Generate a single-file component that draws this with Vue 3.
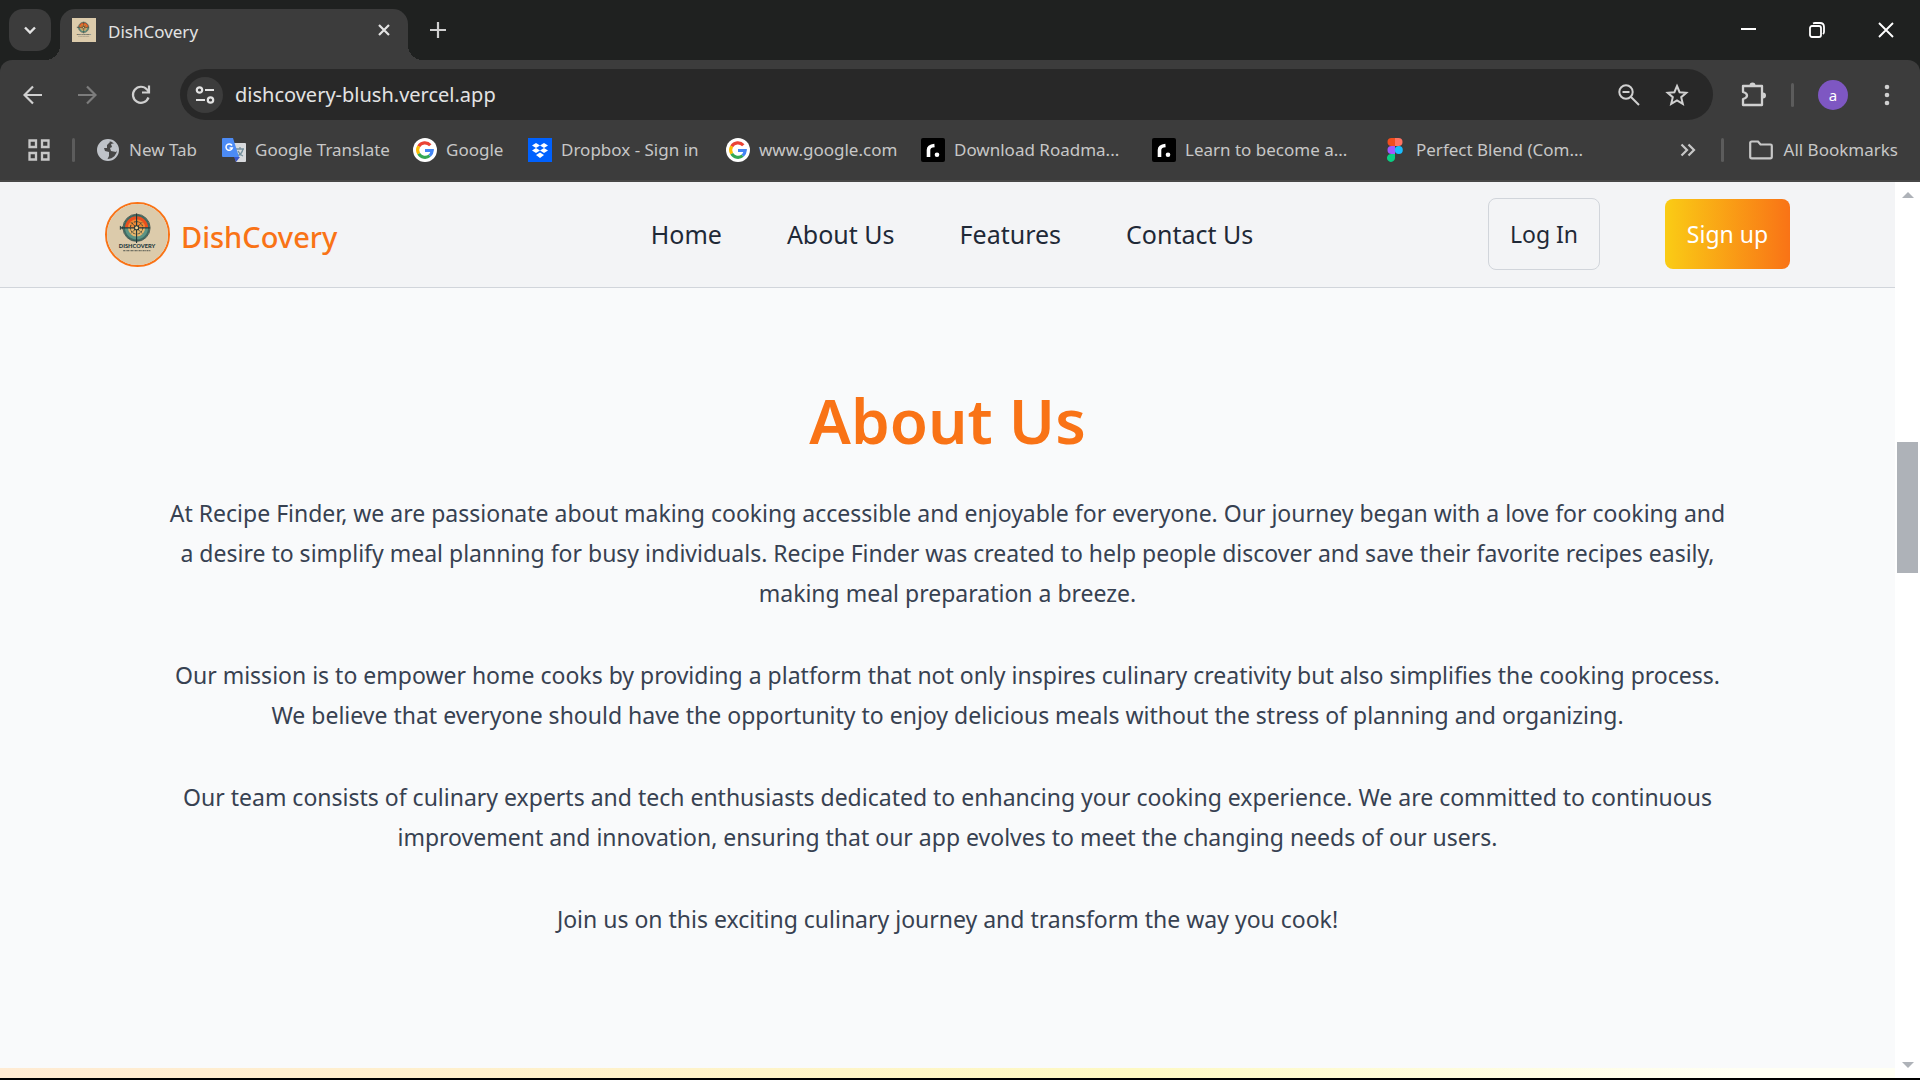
<script setup>
const bookmarks = [
  { label: 'New Tab', icon: 'globe' },
  { label: 'Google Translate', icon: 'translate' },
  { label: 'Google', icon: 'google' },
  { label: 'Dropbox - Sign in', icon: 'dropbox' },
  { label: 'www.google.com', icon: 'google' },
  { label: 'Download Roadma...', icon: 'roadmap' },
  { label: 'Learn to become a...', icon: 'roadmap' },
  { label: 'Perfect Blend (Com...', icon: 'figma' },
]
const links = ['Home', 'About Us', 'Features', 'Contact Us']
const paragraphs = [
  [
    'At Recipe Finder, we are passionate about making cooking accessible and enjoyable for everyone. Our journey began with a love for cooking and',
    'a desire to simplify meal planning for busy individuals. Recipe Finder was created to help people discover and save their favorite recipes easily,',
    'making meal preparation a breeze.',
  ],
  [
    'Our mission is to empower home cooks by providing a platform that not only inspires culinary creativity but also simplifies the cooking process.',
    'We believe that everyone should have the opportunity to enjoy delicious meals without the stress of planning and organizing.',
  ],
  [
    'Our team consists of culinary experts and tech enthusiasts dedicated to enhancing your cooking experience. We are committed to continuous',
    'improvement and innovation, ensuring that our app evolves to meet the changing needs of our users.',
  ],
  ['Join us on this exciting culinary journey and transform the way you cook!'],
]
</script>

<template>
  <div class="browser">
    <div class="tabstrip">
      <button class="tab-search" aria-label="Search tabs">
        <svg width="14" height="14" viewBox="0 0 14 14"><path d="M2 4.500l5 5 5-5" fill="none" stroke="#e3e3e3" stroke-width="2.400" /></svg>
      </button>
      <div class="tab">
        <svg class="favicon" width="24" height="24" viewBox="0 0 64 64"><use href="#emblem" /></svg>
        <span class="tab-title">DishCovery</span>
        <button class="bare" aria-label="Close tab">
          <svg width="14" height="14" viewBox="0 0 14 14"><path d="M2 2l10 10M12 2L2 12" stroke="#e3e3e3" stroke-width="2.200" /></svg>
        </button>
      </div>
      <button class="bare new-tab" aria-label="New tab">
        <svg width="16" height="16" viewBox="0 0 16 16"><path d="M8 0v16M0 8h16" stroke="#d0d0d0" stroke-width="2.200" /></svg>
      </button>
      <div class="window-controls">
        <button class="bare" aria-label="Minimize"><svg width="16" height="16"><path d="M1 7h15" stroke="#fff" stroke-width="2" /></svg></button>
        <button class="bare" aria-label="Restore"><svg width="16" height="16" fill="none" stroke="#fff" stroke-width="1.800"><rect x="1" y="4" width="11" height="11" rx="2" /><path d="M4 1.500Q5 1 6 1h5q4 0 4 4v5q0 1-1 2" /></svg></button>
        <button class="bare" aria-label="Close"><svg width="16" height="16"><path d="M1 1l14 14M15 1L1 15" stroke="#fff" stroke-width="1.900" /></svg></button>
      </div>
    </div>

    <div class="chrome">
      <div class="toolbar">
        <button class="bare tool" aria-label="Back"><svg width="20" height="20" fill="none" stroke="#d0d0d0" stroke-width="2.200"><path d="M19 10H2M10 1.500L1.500 10l8.500 8.500" /></svg></button>
        <button class="bare tool" aria-label="Forward"><svg width="20" height="20" fill="none" stroke="#7c7c7c" stroke-width="2.200"><path d="M1 10h17M10 1.500l8.500 8.500-8.500 8.500" /></svg></button>
        <button class="bare tool" aria-label="Reload"><svg width="20" height="20" fill="none" stroke="#d0d0d0" stroke-width="2.200"><path d="M17.500 12.500a8 8 0 1 1-1.500-8l2 2M18 .5v7h-7" /></svg></button>
        <div class="omnibox">
          <button class="site-info" aria-label="View site information">
            <svg width="20" height="18" fill="none" stroke="#e3e3e3" stroke-width="2.200"><circle cx="4.500" cy="4" r="2.700" /><path d="M10 4h9M1 14h9" /><circle cx="15.500" cy="14" r="2.700" /></svg>
          </button>
          <input class="url" aria-label="Address" type="text" value="dishcovery-blush.vercel.app" />
          <button class="bare" aria-label="Zoom"><svg width="22" height="22" fill="none" stroke="#d0d0d0" stroke-width="2"><circle cx="8" cy="8" r="6.700" /><path d="M13 13l8 8M4.500 8h7" /></svg></button>
          <button class="bare star" aria-label="Bookmark this tab"><svg width="24" height="24" viewBox="0 0 24 24" fill="none" stroke="#d0d0d0" stroke-width="2"><path d="M12 3l2.600 6.200 6.700.6-5.100 4.400 1.600 6.600L12 17.300l-5.800 3.500 1.600-6.600-5.100-4.400 6.700-.6z" /></svg></button>
        </div>
        <button class="bare tool ext" aria-label="Extensions"><svg width="26" height="26" fill="none" stroke="#d0d0d0" stroke-width="2.300" stroke-linejoin="round"><path d="M2 4h19v19H2v-6q4-1 4-3.500T2 10z" /><path d="M8.500 3.500a3 3 0 0 1 6 0zM22 10.500a3 3 0 0 1 0 6z" fill="#d0d0d0" stroke="none" /></svg></button>
        <span class="rule"></span>
        <button class="avatar">a</button>
        <button class="bare tool" aria-label="Menu"><svg width="6" height="24" fill="#d0d0d0"><circle cx="3" cy="4" r="2.300" /><circle cx="3" cy="12" r="2.300" /><circle cx="3" cy="20" r="2.300" /></svg></button>
      </div>

      <div class="bookmarks">
        <button class="bare" aria-label="Apps"><svg width="22" height="22" fill="none" stroke="#c7c7c7" stroke-width="2.300"><path d="M1.500 1.500h6.500v6.500h-6.500zM14 1.500h6.500v6.500H14zM1.500 14h6.500v6.500h-6.500zM14 14h6.500v6.500H14z" /></svg></button>
        <span class="rule"></span>
        <nav class="marks" aria-label="Bookmarks">
          <a v-for="(b, i) in bookmarks" :key="i" href="#" class="mark">
            <svg v-if="b.icon === 'globe'" width="24" height="24" viewBox="0 0 24 24"><circle cx="12" cy="12" r="10" fill="#474747" stroke="#bfc3c9" stroke-width="2" /><path d="M3 8q3-6 10-6l1 2-3 3v3H8l1 3 4 1v4l-2 4q-8-2-9-9zM15 6l4-1 3 6-2 3-5-1-1-3 2-1z" fill="#bfc3c9" /></svg>
            <svg v-else-if="b.icon === 'translate'" width="24" height="24" viewBox="0 0 24 24"><path d="M10 5h13q1 0 1 1v17q0 1-1 1h-9z" fill="#d8dadd" /><path d="M12 19h6l-4 5z" fill="#3a55c8" /><path d="M14 11h8M18 9v2M21 11q-1 5-6 7M16 13q2 4 5 5" stroke="#74909d" stroke-width="1.300" fill="none" /><path d="M1 0h10l6 19H1q-1 0-1-1V1q0-1 1-1z" fill="#4c8bf5" /><path d="M10 7.500A3.200 3.200 0 1 0 10.300 10H7.500" stroke="#fff" stroke-width="1.500" fill="none" /></svg>
            <svg v-else-if="b.icon === 'google'" width="24" height="24" viewBox="0 0 24 24" fill="none" stroke-width="3.200"><circle cx="12" cy="12" r="12" fill="#fff" /><path d="M17.300 7.300A7.300 7.300 0 0 0 5.700 8.300" stroke="#ea4335" /><path d="M5.700 8.300a7.300 7.300 0 0 0 0 7.400" stroke="#fbbc05" /><path d="M5.700 15.700a7.300 7.300 0 0 0 11 1.900" stroke="#34a853" /><path d="M16.700 17.600a7.300 7.300 0 0 0 2.500-5.100H12" stroke="#4285f4" /></svg>
            <svg v-else-if="b.icon === 'dropbox'" width="24" height="24" viewBox="0 0 24 24"><rect width="24" height="24" fill="#0061fe" /><path d="M8 5l4 2.500L8 10 4 7.500zM16 5l4 2.500-4 2.500-4-2.500zM8 10l4 2.500L8 15l-4-2.500zM16 10l4 2.500-4 2.500-4-2.500zM12 14.500l4 2.500-4 3-4-3z" fill="#fff" /></svg>
            <svg v-else-if="b.icon === 'roadmap'" width="24" height="24" viewBox="0 0 24 24"><rect width="24" height="24" rx="2" fill="#000" /><path d="M7.500 19v-7q0-4 6-4.500" fill="none" stroke="#fff" stroke-width="3.600" /><circle cx="16" cy="16.800" r="2.300" fill="#fff" /></svg>
            <svg v-else width="24" height="24" viewBox="0 0 24 24"><path d="M12 0H8.500a4 4 0 0 0 0 8H12z" fill="#f24e1e" /><path d="M12 0h3.500a4 4 0 0 1 0 8H12z" fill="#ff7262" /><path d="M12 8H8.500a4 4 0 0 0 0 8H12z" fill="#a259ff" /><circle cx="15.800" cy="12" r="4" fill="#1abcfe" /><path d="M12 16H8.500a4 4 0 1 0 3.500 4z" fill="#0acf83" /></svg>
            <span>{{ b.label }}</span>
          </a>
        </nav>
        <button class="bare" aria-label="More bookmarks"><svg width="16" height="14" fill="none" stroke="#c7c7c7" stroke-width="2.200"><path d="M1.500 1.500L7 7l-5.500 5.500M8.500 1.500L14 7l-5.500 5.500" /></svg></button>
        <span class="rule"></span>
        <a href="#" class="mark all"><svg width="24" height="20" fill="none" stroke="#c7c7c7" stroke-width="2.200"><path d="M1.200 3q0-1.500 1.500-1.500H9l2.500 3h10q1.300 0 1.300 1.300v11q0 1.500-1.500 1.500H2.700q-1.500 0-1.500-1.500z" /></svg><span>All Bookmarks</span></a>
      </div>
    </div>

    <div class="viewport">
      <div class="page">
        <header class="site-header">
          <a href="#" class="brand">
            <svg class="logo" width="65" height="65" viewBox="0 0 64 64">
              <g id="emblem">
                <rect width="64" height="64" fill="#dccbab" />
                <circle cx="31" cy="25" r="13" fill="#e8b66b" />
                <path d="M18 25a13 13 0 0 1 26 0z" fill="#e8501f" />
                <path d="M22 25a9 9 0 0 1 18 0z" fill="#f08a35" />
                <path d="M18 25a13 13 0 0 0 26 0h-4a9 9 0 0 1-18 0z" fill="#5d9484" />
                <circle cx="31" cy="25" r="13" fill="none" stroke="#3f6b62" stroke-width="1.800" />
                <circle cx="31" cy="25" r="14.300" fill="none" stroke="#24393b" stroke-width=".7" />
                <circle cx="31" cy="25" r="6.500" fill="none" stroke="#2b3a38" stroke-width="1" stroke-dasharray="2 1" />
                <path d="M31 10v31M14 25h31" stroke="#24393b" stroke-width="1.200" />
                <path d="M25 19l12 12M37 19L25 31" stroke="#24393b" stroke-width=".7" />
                <rect x="28.500" y="22.500" width="5" height="5" fill="#24393b" />
                <circle cx="31" cy="25" r="1.600" fill="#f2d08b" />
                <path d="M14 23v4M16 23.500v3" stroke="#24393b" stroke-width="1" />
                <text x="31.500" y="46.500" text-anchor="middle" font-family="Lato, sans-serif" font-weight="900" font-size="6" fill="#24393b">DISHCOVERY</text>
                <path d="M17 49h29" stroke="#4b514b" stroke-width="1" stroke-dasharray="2 .6 1 .5" />
              </g>
            </svg>
            <span>DishCovery</span>
          </a>
          <nav class="site-nav">
            <a v-for="l in links" :key="l" href="#">{{ l }}</a>
          </nav>
          <div class="actions">
            <button class="login">Log In</button>
            <button class="signup">Sign up</button>
          </div>
        </header>
        <main>
          <section class="about">
            <h1>About Us</h1>
            <p v-for="(p, i) in paragraphs" :key="i">
              <template v-for="(line, j) in p" :key="j"><br v-if="j" />{{ line }}</template>
            </p>
          </section>
          <section class="next"></section>
        </main>
      </div>
      <div class="scrollbar" aria-hidden="true">
        <svg width="12" height="6"><path d="M0 6L6 0l6 6z" fill="#aeb2b8" /></svg>
        <div class="track"><div class="thumb"></div></div>
        <svg width="12" height="6"><path d="M0 0l6 6 6-6z" fill="#aeb2b8" /></svg>
      </div>
    </div>
  </div>
</template>

<style>
body { margin: 0; background: #000; }
</style>

<style scoped>
* { box-sizing: border-box; }
.browser {
  display: flex;
  flex-direction: column;
  height: 100vh;
  overflow: hidden;
  border-bottom: 2px solid #000;
  font-family: "Noto Sans", "Open Sans", sans-serif;
  background: #1f2120;
}
svg { display: block; flex: none; }
button { font-family: inherit; cursor: pointer; padding: 0; }
a { text-decoration: none; color: inherit; }
.bare {
  display: flex;
  align-items: center;
  justify-content: center;
  border: 0;
  background: none;
}

.tabstrip { display: flex; align-items: flex-start; height: 60px; padding: 9px 0 0 9px; flex: none; }
.tab-search {
  display: flex;
  align-items: center;
  justify-content: center;
  width: 42px;
  height: 42px;
  border: 0;
  border-radius: 14px;
  background: #3c3c3c;
}
.tab {
  position: relative;
  display: flex;
  align-items: center;
  width: 348px;
  height: 51px;
  margin-left: 9px;
  padding: 0 17px 9px 12px;
  border-radius: 15px 15px 0 0;
  background: #3c3c3c;
}
.tab::before, .tab::after {
  content: "";
  position: absolute;
  bottom: 0;
  width: 15px;
  height: 15px;
}
.tab::before { right: 100%; background: radial-gradient(circle at 0 0, transparent 15px, #3c3c3c 15px); }
.tab::after { left: 100%; background: radial-gradient(circle at 100% 0, transparent 15px, #3c3c3c 15px); }
.tab-title { flex: 1; margin-left: 12px; padding-top: 3px; font-size: 17px; line-height: 24px; color: #e3e3e3; }
.new-tab { width: 42px; height: 42px; margin-left: 9px; }
.window-controls { display: flex; margin-left: auto; }
.window-controls .bare { width: 69px; height: 42px; }

.chrome { flex: none; background: #3c3c3c; border-bottom: 2px solid #474747; border-radius: 12px 12px 0 0; }
.toolbar { display: flex; align-items: center; height: 69px; padding: 0 6px; }
.tool { width: 54px; height: 51px; }
.omnibox {
  flex: 1;
  display: flex;
  align-items: center;
  height: 51px;
  margin-left: 12px;
  padding: 0 24px 0 7px;
  border-radius: 26px;
  background: #282828;
}
.site-info {
  display: flex;
  align-items: center;
  justify-content: center;
  width: 36px;
  height: 36px;
  border: 0;
  border-radius: 50%;
  background: #3c3c3c;
}
.url {
  flex: 1;
  min-width: 0;
  margin-left: 12px;
  padding: 0;
  border: 0;
  outline: 0;
  background: none;
  color: #e3e3e3;
  font-family: inherit;
  font-size: 20px;
}
.star { margin-left: 25px; }
.ext { margin-left: 14px; }
.rule { width: 3px; height: 24px; border-radius: 2px; background: #5c5c5c; flex: none; }
.toolbar .rule { margin: 0 24px 0 10px; }
.avatar {
  width: 30px;
  height: 30px;
  margin-right: 12px;
  border: 0;
  border-radius: 50%;
  background: #7e57c2;
  color: #fff;
  font-size: 15px;
  line-height: 30px;
}
.bookmarks { display: flex; align-items: center; height: 51px; padding: 0 22px 9px 28px; }
.bookmarks > .rule { margin: 0 21px 0 22px; }
.bookmarks > .marks ~ .rule { margin: 0 25px; }
.marks {
  flex: 1;
  display: grid;
  grid-template-columns: 126px 191px 115px 198px 195px 231px 231px 231px;
}
.mark {
  display: flex;
  align-items: center;
  gap: 9px;
  color: #c7c7c7;
  font-size: 17px;
  line-height: 24px;
  white-space: nowrap;
}
.all { gap: 11px; }

.viewport { display: flex; flex: 1; min-height: 0; background: #fff; }
.page { flex: 1; min-width: 0; overflow: hidden; background: #f9fafb; }
.site-header {
  display: grid;
  grid-template-columns: 1fr auto 1fr;
  align-items: center;
  height: 106px;
  padding: 0 105px 2px;
  border-bottom: 1px solid #d1d5db;
  background: #f3f4f6;
  color: #1f2937;
}
.brand { display: flex; align-items: center; gap: 11px; padding-top: 2px; color: #f97316; font-size: 29px; font-weight: 500; }
.brand span { padding-top: 4px; }
.logo { border: 2px solid #f97316; border-radius: 50%; }
.site-nav { display: flex; gap: 65px; margin-left: 9px; font-size: 25px; }
.actions { display: flex; align-items: center; justify-content: flex-end; gap: 65px; }
.login, .signup { border-radius: 8px; font-size: 23px; }
.login { width: 112px; height: 72px; border: 1px solid #d1d5db; background: none; color: #1f2937; }
.signup { width: 125px; height: 70px; border: 0; background: linear-gradient(to right, #facc15, #f97316); color: #fff; }
.about { height: 780px; padding-top: 84px; text-align: center; }
h1 { margin: 0 0 25px; color: #f97316; font-size: 62px; line-height: 96px; font-weight: 600; }
p { margin: 0 0 42px; color: #374151; font-size: 23px; line-height: 40px; white-space: nowrap; }
.next { height: 400px; background: linear-gradient(to right, #ffebd3, #fff0cc 25%, #fef9c3 60%, #fffff4 92%); }

.scrollbar { display: flex; flex-direction: column; align-items: center; width: 25px; padding: 10px 0; background: #fff; }
.track { flex: 1; width: 21px; padding-top: 244px; }
.thumb { height: 131px; background: #aeb2b8; }
</style>
